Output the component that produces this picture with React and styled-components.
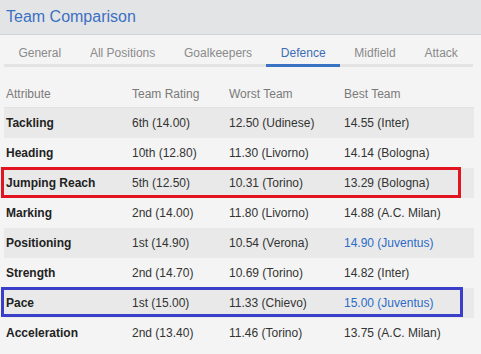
import React from "react";
import styled, { createGlobalStyle } from "styled-components";

const GlobalStyle = createGlobalStyle`
  body {
    margin: 0;
    background: #f4f4f4;
    font-family: "Liberation Sans", Arial, sans-serif;
  }
`;

const tabs = ["General", "All Positions", "Goalkeepers", "Defence", "Midfield", "Attack"];

const rows = [
  { name: "Tackling", rating: "6th (14.00)", worst: "12.50 (Udinese)", best: "14.55 (Inter)" },
  { name: "Heading", rating: "10th (12.80)", worst: "11.30 (Livorno)", best: "14.14 (Bologna)" },
  { name: "Jumping Reach", rating: "5th (12.50)", worst: "10.31 (Torino)", best: "13.29 (Bologna)", mark: "red" },
  { name: "Marking", rating: "2nd (14.00)", worst: "11.80 (Livorno)", best: "14.88 (A.C. Milan)" },
  { name: "Positioning", rating: "1st (14.90)", worst: "10.54 (Verona)", best: "14.90 (Juventus)", bestIsUs: true },
  { name: "Strength", rating: "2nd (14.70)", worst: "10.69 (Torino)", best: "14.82 (Inter)" },
  { name: "Pace", rating: "1st (15.00)", worst: "11.33 (Chievo)", best: "15.00 (Juventus)", bestIsUs: true, mark: "blue" },
  { name: "Acceleration", rating: "2nd (13.40)", worst: "11.46 (Torino)", best: "13.75 (A.C. Milan)" },
];

// annotation boxes drawn over a row
const marks = {
  red: { color: "#e2141f", width: 460, height: 31 },
  blue: { color: "#3a3ec8", width: 462, height: 30 },
};

const Page = styled.div`
  width: 481px;
  height: 354px;
  overflow: hidden;
`;

const TitleBar = styled.div`
  height: 34px;
  line-height: 34px;
  padding-left: 6px;
  background: #e3e4e6;
  border-bottom: 1px solid #d2d3d5;
  color: #3b70c2;
  font-size: 16px;
`;

const TabBar = styled.div`
  display: flex;
  margin: 7px 8px 0 4px;
  border-bottom: 3px solid #e3e3e3;
`;

const Tab = styled.div`
  padding: 0 14.4px;
  height: 22px;
  line-height: 22px;
  font-size: 12px;
  color: ${(p) => (p.$active ? "#3b6db6" : "#8a8a8a")};
  border-bottom: 3px solid ${(p) => (p.$active ? "#3a72c4" : "transparent")};
  margin-bottom: -3px;
`;

const Table = styled.div`
  margin: 13px 7px 0 4px;
`;

const Row = styled.div`
  position: relative;
  display: grid;
  grid-template-columns: 126px 97px 115px 1fr;
  height: 30px;
  align-items: center;
  background: ${(p) => (p.$shaded ? "#e9e9e9" : "transparent")};

  &::after {
    content: ${(p) => (p.$mark ? '""' : "none")};
    position: absolute;
    left: -3px;
    top: -1px;
    height: ${(p) => (p.$mark ? marks[p.$mark].height : 0)}px;
    width: ${(p) => (p.$mark ? marks[p.$mark].width : 0)}px;
    box-sizing: border-box;
    border: 3px solid ${(p) => (p.$mark ? marks[p.$mark].color : "transparent")};
  }
`;

const HeadRow = styled(Row)`
  height: 27px;
  border-bottom: 1px solid #e2e2e2;
`;

const HeadCell = styled.div`
  padding-left: 2px;
  font-size: 12px;
  color: #7a7a7a;
`;

const Cell = styled.div`
  padding-left: 2px;
  font-size: 12px;
  font-weight: ${(p) => (p.$bold ? "bold" : "normal")};
  color: ${(p) => (p.$link ? "#2b6bc7" : p.$bold ? "#222" : "#333")};
  white-space: nowrap;
`;

export default function App() {
  return (
    <Page>
      <GlobalStyle />
      <TitleBar>Team Comparison</TitleBar>
      <TabBar>
        {tabs.map((t) => (
          <Tab key={t} $active={t === "Defence"}>
            {t}
          </Tab>
        ))}
      </TabBar>
      <Table>
        <HeadRow>
          <HeadCell>Attribute</HeadCell>
          <HeadCell>Team Rating</HeadCell>
          <HeadCell>Worst Team</HeadCell>
          <HeadCell>Best Team</HeadCell>
        </HeadRow>
        {rows.map((r, i) => (
          <Row key={r.name} $shaded={i % 2 === 0} $mark={r.mark}>
            <Cell $bold>{r.name}</Cell>
            <Cell>{r.rating}</Cell>
            <Cell>{r.worst}</Cell>
            <Cell $link={r.bestIsUs}>{r.best}</Cell>
          </Row>
        ))}
      </Table>
    </Page>
  );
}
